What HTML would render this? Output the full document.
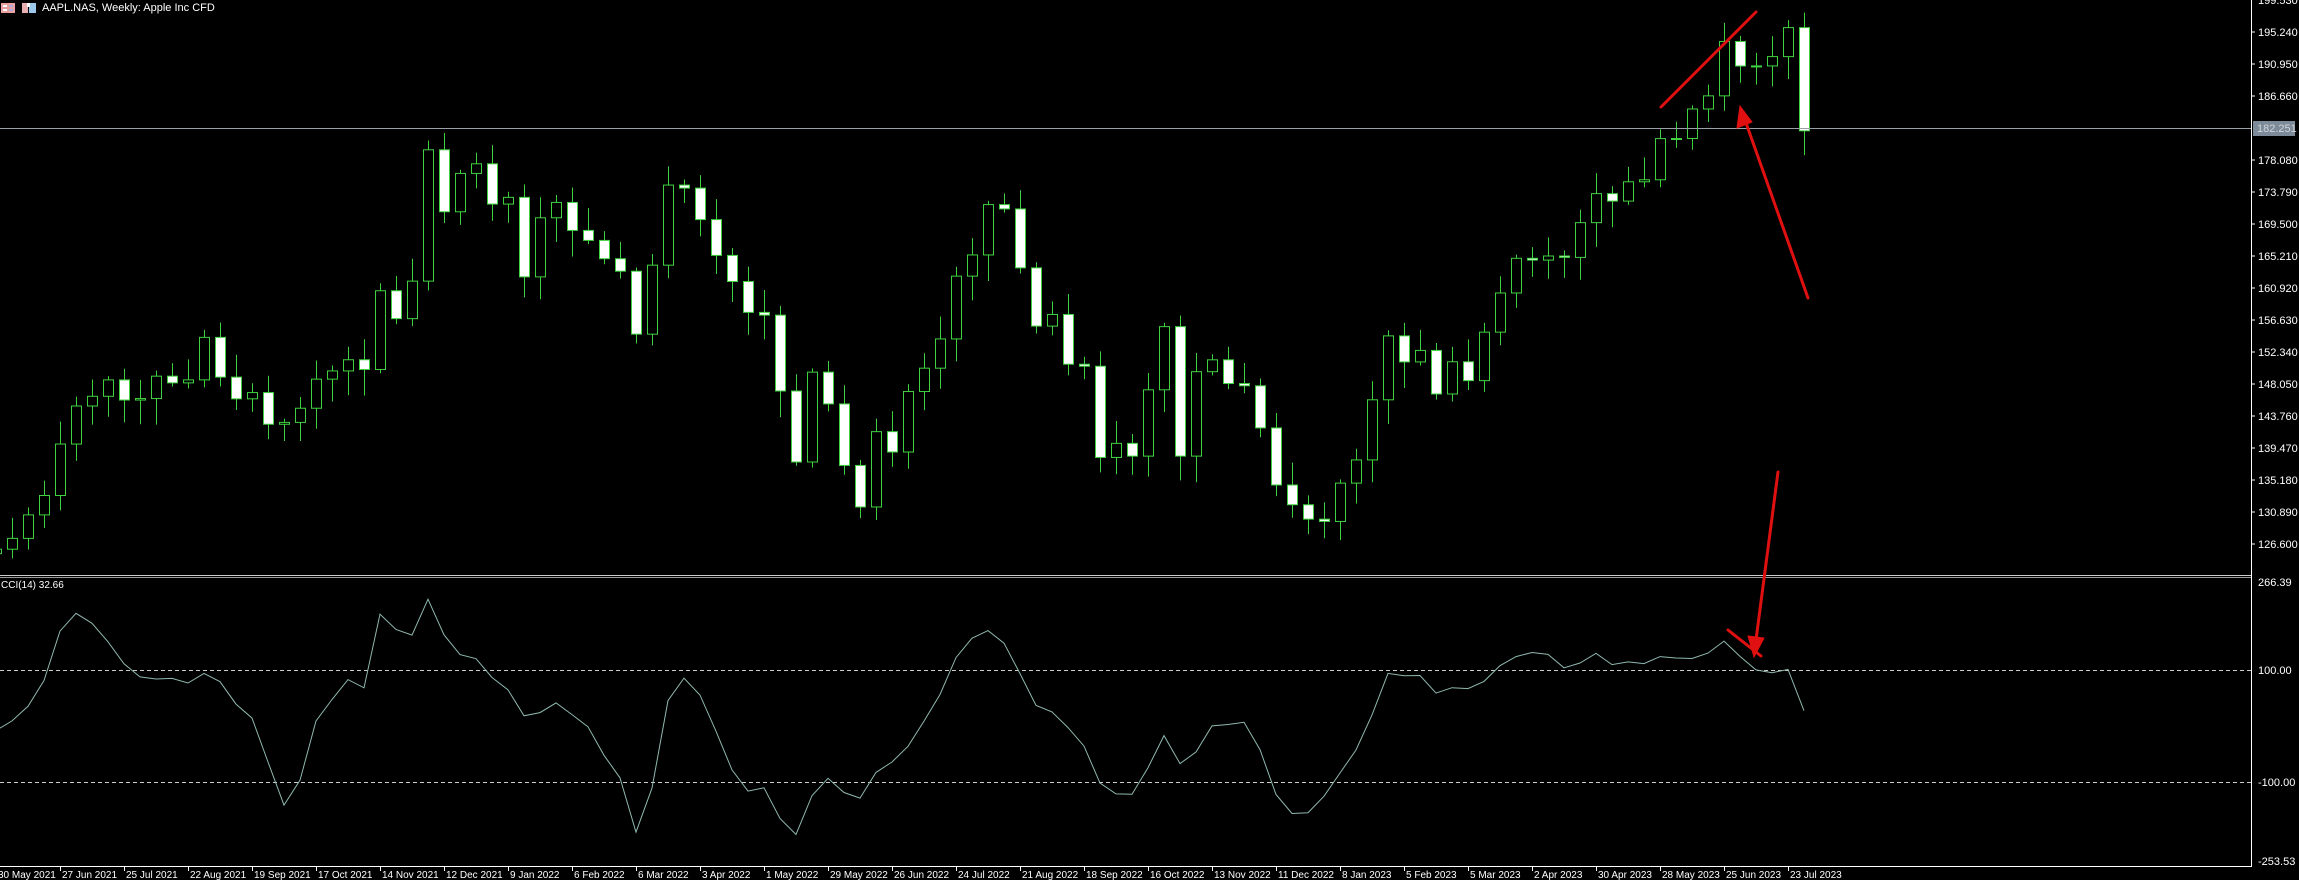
<!DOCTYPE html>
<html><head><meta charset="utf-8">
<style>
html,body{margin:0;padding:0;background:#000;width:2299px;height:880px;overflow:hidden}
svg{display:block}
text{font-family:"Liberation Sans",sans-serif;font-size:11px;fill:#fff}
.d{font-size:10px}
</style></head><body>
<svg id="s" width="2299" height="880" xmlns="http://www.w3.org/2000/svg">
<rect width="2299" height="880" fill="#000"/>
<g id="cand"></g>
<line x1="0" y1="128.5" x2="2251" y2="128.5" stroke="#9aa0a8" stroke-width="1"/>
<rect x="2253" y="121" width="42" height="15" fill="#7d8a99"/>
<text x="2257" y="132" style="fill:#d0d6dc">182.251</text>
<line x1="0" y1="575.5" x2="2251" y2="575.5" stroke="#ccc"/>
<line x1="0" y1="577.5" x2="2251" y2="577.5" stroke="#999"/>
<line x1="0" y1="670.5" x2="2251" y2="670.5" stroke="#ccc" stroke-dasharray="4,3"/>
<line x1="0" y1="782.5" x2="2251" y2="782.5" stroke="#ccc" stroke-dasharray="4,3"/>
<polyline id="cci" fill="none" stroke="#8fb8b0" stroke-width="1"/>
<line x1="2251.5" y1="0" x2="2251.5" y2="867" stroke="#fff"/>
<line x1="0" y1="866.5" x2="2252" y2="866.5" stroke="#fff"/>
<g id="axis"></g>
<text x="42" y="11">AAPL.NAS, Weekly:  Apple Inc CFD</text>
<g>
<rect x="1" y="3" width="14" height="10" fill="#e8a0a0"/><rect x="3" y="5" width="4" height="2" fill="#fff"/><rect x="9" y="5" width="4" height="2" fill="#aad"/><rect x="3" y="9" width="4" height="2" fill="#fff"/><rect x="9" y="9" width="4" height="2" fill="#aad"/>
<rect x="22" y="3" width="6" height="10" fill="#e8b0b0"/><rect x="29" y="3" width="7" height="10" fill="#9cc8ee"/><rect x="27" y="3" width="3" height="4" fill="#fff"/>
</g>
<text x="1" y="588" style="font-size:10px">CCI(14) 32.66</text>
<g stroke="#e01010" stroke-width="3" stroke-linecap="round" fill="#e01010">
<line x1="1661" y1="107" x2="1756" y2="12"/>
<line x1="1808" y1="298" x2="1745" y2="120"/>
<polygon points="1740,106 1737,128 1752,122" stroke-width="1"/>
<line x1="1778" y1="472" x2="1756" y2="640"/>
<polygon points="1754,657 1748,636 1764,638" stroke-width="1"/>
<line x1="1728" y1="630" x2="1761" y2="656"/>
</g>
</svg>
<script>
var C=[129.9,121.3,121.4,121.0,120.5,121.2,123.0,133.0,134.2,134.3,131.5,130.2,
127.4,125.4,125.3,125.9,127.35,130.5,133.1,140,145.1,146.4,148.6,145.9,146.1,149.1,148.2,148.6,154.3,148.97,146.06,146.9,142.65,142.9,144.8,148.7,149.8,151.3,149.99,160.55,156.81,161.84,179.45,171.14,176.28,177.57,172.17,173.07,162.41,170.33,172.39,168.64,167.30,164.85,163.17,154.73,163.98,174.72,174.31,170.09,165.29,161.79,157.65,157.28,147.11,137.59,149.64,145.38,137.13,131.56,141.66,138.93,147.04,150.17,154.09,162.51,165.35,172.10,171.52,163.62,155.81,157.37,150.70,150.43,138.20,140.09,138.38,147.27,155.74,138.38,149.70,151.29,148.11,147.81,142.16,134.51,131.86,129.93,129.62,134.76,137.87,145.93,154.50,151.01,152.55,146.71,151.03,148.50,155.00,160.25,164.90,164.66,165.21,165.02,169.68,173.57,172.57,175.16,175.43,180.95,180.96,184.92,186.68,193.97,190.68,190.69,191.94,195.83,181.99];
var N=C.length;
function py(p){return 32+(195.24-p)*7.459;}
var O=[],H=[],L=[];
for(var i=0;i<N;i++){var o=i?C[i-1]:C[i];O.push(o);var w1=0.5+((i*37)%11)/4,w2=0.5+((i*53)%13)/4;H.push(Math.max(o,C[i])+w1);L.push(Math.min(o,C[i])-w2);}
var g=document.getElementById('cand'),h='';
for(var i=0;i<N;i++){var x=1804-16*(N-1-i);if(x<-10)continue;
var o=O[i],c=C[i],t=py(Math.max(o,c)),b=py(Math.min(o,c));if(b-t<1)b=t+1;
h+='<line x1="'+(x+.5)+'" y1="'+py(H[i])+'" x2="'+(x+.5)+'" y2="'+py(L[i])+'" stroke="#3fd13f"/>';
if(c>=o)h+='<rect x="'+(x-4.5)+'" y="'+t+'" width="10" height="'+(b-t)+'" fill="#000" stroke="#3fd13f"/>';
else h+='<rect x="'+(x-4.5)+'" y="'+t+'" width="10" height="'+(b-t)+'" fill="#fff" stroke="#3fd13f"/>';}
g.innerHTML=h;
var tp=[];for(var i=0;i<N;i++)tp.push((H[i]+L[i]+C[i])/3);
var pts=[];
for(var i=13;i<N;i++){var s=0;for(var k=i-13;k<=i;k++)s+=tp[k];var m=s/14,d=0;for(var k=i-13;k<=i;k++)d+=Math.abs(tp[k]-m);d/=14;
var v=(tp[i]-m)/(0.015*d);v=Math.max(-250,Math.min(260,v));var x=1804-16*(N-1-i);
pts.push(x+','+(582+(266.39-v)*0.5366).toFixed(1));}
document.getElementById('cci').setAttribute('points',pts.join(' '));
var a='',P=[195.24,190.95,186.66,178.08,173.79,169.50,165.21,160.92,156.63,152.34,148.05,143.76,139.47,135.18,130.89,126.60];
P.forEach(function(p){var y=py(p);a+='<line x1="2251" y1="'+y+'" x2="2255" y2="'+y+'" stroke="#fff"/><text x="2258" y="'+(y+4)+'">'+p.toFixed(3)+'</text>';});
a+='<text x="2258" y="4">199.530</text>';
[[266.39,586],[100,674],[-100,786],[-253.53,865]].forEach(function(q){a+='<text x="2258" y="'+q[1]+'">'+q[0].toFixed(2)+'</text>';});
var mo=['Jan','Feb','Mar','Apr','May','Jun','Jul','Aug','Sep','Oct','Nov','Dec'];
var d0=new Date(Date.UTC(2021,4,30));
for(var k=0;k<29;k++){var d=new Date(d0.getTime()+k*28*86400000);var x=-4+64*k;
a+='<line x1="'+(x+.5)+'" y1="867" x2="'+(x+.5)+'" y2="871" stroke="#fff"/><text class="d" x="'+(x+2)+'" y="878">'+d.getUTCDate()+' '+mo[d.getUTCMonth()]+' '+d.getUTCFullYear()+'</text>';}
document.getElementById('axis').innerHTML=a;
</script>
</body></html>
